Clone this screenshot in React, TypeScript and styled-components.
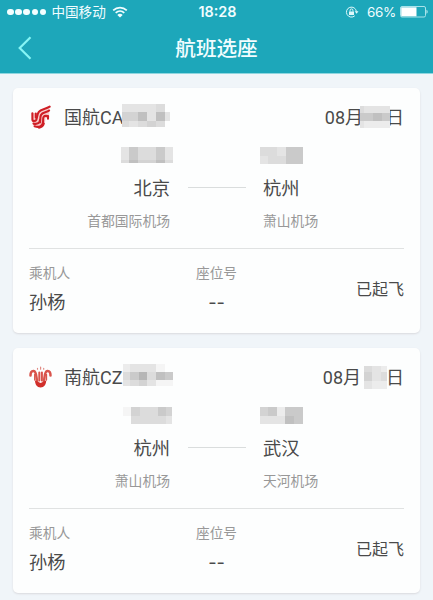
import styled, { createGlobalStyle, css } from 'styled-components';

interface MosaicData {
   cols: number[];
   rows: number[];
   tones: string;
   shift?: string;
}

interface Stop {
   city: string;
   airport: string;
   time: MosaicData;
}

interface Flight {
   airline: string;
   logo: 'phoenix' | 'kapok';
   code: MosaicData;
   day: MosaicData;
   from: Stop;
   to: Stop;
   passenger: string;
   seat: string;
   status: string;
}

// One hex digit per tile, read row by row
const toneColors: Record<string, string> = {
   '0': 'transparent',
   '1': '#f5f5f5',
   '2': '#ececec',
   '3': '#e4e4e4',
   '4': '#dcdcdc',
   '5': '#d3d3d3',
   '6': '#cacaca',
   '7': '#c0c0c0',
   '8': '#b6b6b6',
};

const flights: Flight[] = [
   {
      airline: '国航CA',
      logo: 'phoenix',
      code: {
         cols: [7, 9, 9, 9, 9, 5],
         rows: [8, 9, 6],
         tones: '333340' + '557373' + '434540',
         shift: '-3px 0 0 -1px',
      },
      day: {
         cols: [4, 9, 9, 8],
         rows: [7, 8, 7],
         tones: '4333' + '6676' + '3222',
         shift: '0 -4px 0 -3px',
      },
      from: {
         city: '北京',
         airport: '首都国际机场',
         time: {
            cols: [8, 9, 9, 9, 9, 8],
            rows: [13, 3],
            tones: '364463' + '475574',
            shift: '0 -3px 0 0',
         },
      },
      to: {
         city: '杭州',
         airport: '萧山机场',
         time: {
            cols: [8, 9, 9, 17],
            rows: [9, 8],
            tones: '4436' + '3446',
            shift: '0 0 0 -3px',
         },
      },
      passenger: '孙杨',
      seat: '--',
      status: '已起飞',
   },
   {
      airline: '南航CZ',
      logo: 'kapok',
      code: {
         cols: [7, 9, 8, 9, 9, 8],
         rows: [8, 8, 6],
         tones: '233310' + '468476' + '345311',
         shift: '-4px 0 0 0',
      },
      day: {
         cols: [8, 9, 6],
         rows: [6, 9, 8],
         tones: '432' + '534' + '322',
         shift: '0 -1px 0 3px',
      },
      from: {
         city: '杭州',
         airport: '萧山机场',
         time: {
            cols: [8, 9, 9, 9, 8, 6],
            rows: [9, 8],
            tones: '154465' + '044443',
            shift: '0 -2px 0 0',
         },
      },
      to: {
         city: '武汉',
         airport: '天河机场',
         time: {
            cols: [8, 9, 8, 9, 9],
            rows: [9, 8],
            tones: '56266' + '33376',
            shift: '0 0 0 -3px',
         },
      },
      passenger: '孙杨',
      seat: '--',
      status: '已起飞',
   },
];

const Mosaic = ({ cols, rows, tones, shift }: MosaicData) => (
   <Tiles $cols={cols} $rows={rows} $shift={shift}>
      {tones.split('').map((tone, i) => (
         <Tile key={i} $tone={tone} />
      ))}
   </Tiles>
);

const PhoenixLogo = () => (
   <svg width="22" height="24" viewBox="0 0 22 24" fill="none">
      <path
         fill="#f9d0ce"
         d="M2.500 8h5v4C8.500 5 12 4 20.500 1.500L20 13h-3.500c0 5-1.500 9-6.500 10L4 20.500Z"
      />
      <g stroke="#cf1f26" strokeWidth="2.100" strokeLinecap="round">
         <path d="M3.400 8.300v6.200c0 2 3 2 3.900.2.900-2 .7-5.500 2.500-7.900C12 3.700 16.500 4.400 20.700 1.700" />
         <path d="M6.800 8.500v4M11 17.500c.6-2.200-.1-5.400 1-7.500 1.600-3 5.600-2.200 8.100-4.500" />
         <path d="M4.500 18.600c4.500 1 6.200-.8 6.500-3.600M14 17.500c.5-2-.4-4 .7-5.700 1-1.500 3-.9 4.400-.6" />
         <path d="M5.600 21.300c5 1.600 8.200-.4 8.400-4.500M19 11.200v2.500" />
         <path d="M10 22.600c2.700-.5 4.300-1.800 4.800-4" />
      </g>
   </svg>
);

const KapokLogo = () => (
   <svg width="24" height="24" viewBox="0 0 24 24" fill="none">
      <g stroke="#d9544c" strokeLinecap="round">
         <path
            strokeWidth="2.500"
            d="M8.200 17C7.200 13.500 8 6.300 4.600 6 2.300 5.800 1.500 8 1.500 10.500M14.800 17c1-3.500.2-10.700 3.600-11 2.300-.2 3.100 2 3.100 4.500"
         />
         <path strokeWidth="2" d="M10.300 15.500V7.500M12.900 15.500V7.500" />
         <path strokeWidth="1.300" d="M5.700 15V9.500M17.500 15V9.500" />
         <path strokeWidth="1.200" stroke="#e08a84" d="M8.500 4.200v-.8M11.600 4.200V2M14.700 4.200v-.8" />
      </g>
      <path fill="#d12f2b" d="M6 15.500 11.600 18l5.600-2.500c-.1 4-2 7-5.600 7S6.100 19.500 6 15.500Z" />
   </svg>
);

const WifiIcon = () => (
   <svg width="16" height="12" viewBox="0 0 16 12" fill="none" stroke="#f1fdff">
      <path strokeWidth="1.700" d="M1.200 4.300c3.900-3.700 9.700-3.700 13.600 0" />
      <path strokeWidth="1.700" d="M3.700 6.900c2.500-2.300 6.100-2.300 8.600 0" />
      <path fill="#f1fdff" stroke="none" d="M5.300 8.900c1.600-1.400 3.800-1.400 5.400 0L8 11.600Z" />
   </svg>
);

const RotationLockIcon = () => (
   <svg width="14" height="12" viewBox="0 0 14 12" fill="none" stroke="#dff8fb">
      <path d="M9.800 9.800A5 5 0 1 1 11.400 5.500" />
      <path fill="#dff8fb" stroke="none" d="M9.700 5.300h3.800l-1.900 2.400ZM4 5.400h5v3.500H4Z" />
      <path d="M5.100 5.500V4.300a1.400 1.400 0 0 1 2.800 0v1.200" />
   </svg>
);

const BatteryIcon = () => (
   <svg width="28" height="12" viewBox="0 0 28 12" fill="none">
      <rect x=".5" y=".5" width="25" height="10.500" rx="1.500" stroke="#a9e3ea" />
      <path fill="#fff" d="M1.200 1.300h15.300v9H1.200Z" />
      <path fill="#c9f0f4" d="M26.500 3.800c1.500.6 1.500 3.400 0 4Z" />
   </svg>
);

const BackIcon = () => (
   <svg width="14" height="24" viewBox="0 0 14 24" fill="none">
      <path d="M12.500 1.200 1.700 12l10.800 10.800" stroke="#86f5f5" strokeWidth="2.200" />
   </svg>
);

const FlightCard = ({ flight }: { flight: Flight }) => (
   <Card>
      <CardHead>
         <Logo>{flight.logo === 'phoenix' ? <PhoenixLogo /> : <KapokLogo />}</Logo>
         <HeadText>{flight.airline}</HeadText>
         <Mosaic {...flight.code} />
         <DateGroup>
            <HeadText>08月</HeadText>
            <Mosaic {...flight.day} />
            <HeadText>日</HeadText>
         </DateGroup>
      </CardHead>
      <Route>
         <StopColumn $end>
            <TimeSlot><Mosaic {...flight.from.time} /></TimeSlot>
            <City>{flight.from.city}</City>
            <Airport>{flight.from.airport}</Airport>
         </StopColumn>
         <RouteLine />
         <StopColumn>
            <TimeSlot><Mosaic {...flight.to.time} /></TimeSlot>
            <City>{flight.to.city}</City>
            <Airport>{flight.to.airport}</Airport>
         </StopColumn>
      </Route>
      <CardFoot>
         <Field>
            <Label>乘机人</Label>
            <Value>{flight.passenger}</Value>
         </Field>
         <Field $center>
            <Label>座位号</Label>
            <Value>{flight.seat}</Value>
         </Field>
         <Status>{flight.status}</Status>
      </CardFoot>
   </Card>
);

const App = () => (
   <>
      <GlobalStyle />
      <Screen>
         <Header>
            <StatusBar>
               <Carrier>
                  <Signal>
                     {[0, 1, 2, 3, 4].map((dot) => <SignalDot key={dot} />)}
                  </Signal>
                  <CarrierName>中国移动</CarrierName>
                  <WifiIcon />
               </Carrier>
               <Clock>18:28</Clock>
               <Power>
                  <RotationLockIcon />
                  <Percent>66%</Percent>
                  <BatteryIcon />
               </Power>
            </StatusBar>
            <NavBar>
               <BackButton aria-label="返回"><BackIcon /></BackButton>
               <Title>航班选座</Title>
            </NavBar>
         </Header>
         <List>
            {flights.map((flight) => (
               <FlightCard key={flight.airline} flight={flight} />
            ))}
         </List>
      </Screen>
   </>
);

export default App;

const GlobalStyle = createGlobalStyle`
   body {
      margin: 0;
      background: #f0f5f9;
   }
   * {
      box-sizing: border-box;
   }
   svg {
      display: block;
      flex: none;
   }
`;

const Screen = styled.div`
   width: 433px;
   height: 600px;
   overflow: hidden;
   background: #f0f5f9;
   color: #4a4a4a;
   font-family: Roboto, 'Noto Sans CJK SC', sans-serif;
   font-weight: 400;
   white-space: nowrap;
`;

const Header = styled.header`
   height: 74px;
   background: #1da7ba;
   border-bottom: 1px solid #8fd6df;
   color: #f1fdff;
`;

const StatusBar = styled.div`
   display: grid;
   grid-template-columns: 1fr auto 1fr;
   align-items: center;
   height: 24px;
   padding: 0 5px 0 7px;
`;

const Carrier = styled.div`
   display: flex;
   align-items: center;
`;

const Signal = styled.div`
   display: flex;
   gap: 1.500px;
   margin-right: 5px;
`;

const SignalDot = styled.span`
   width: 6.700px;
   height: 6.700px;
   border-radius: 50%;
   background: #f4feff;
`;

const CarrierName = styled.span`
   margin-right: 6px;
   font-size: 13.600px;
   line-height: 20px;
`;

const Clock = styled.span`
   font: 600 14.400px/20px Inter, sans-serif;
`;

const Power = styled.div`
   display: flex;
   align-items: center;
   justify-content: flex-end;
`;

const Percent = styled.span`
   margin: 0 4px 0 8px;
   font: 400 13.500px/20px Inter, sans-serif;
   letter-spacing: -0.3px;
`;

const NavBar = styled.div`
   display: grid;
   grid-template-columns: 60px 1fr 60px;
   align-items: center;
   height: 48px;
`;

const BackButton = styled.button`
   padding: 0 0 0 18px;
   border: 0;
   background: none;
`;

const Title = styled.h1`
   margin: 0;
   padding-top: 2px;
   font-size: 20.600px;
   font-weight: 500;
   line-height: 28px;
   text-align: center;
`;

const List = styled.main`
   display: flex;
   flex-direction: column;
   gap: 15px;
   padding: 14px 13px;
`;

const Card = styled.section`
   flex: none;
   height: 245px;
   padding: 0 16px;
   border-radius: 5px;
   background: #fdfefe;
   box-shadow: 0 1px 2px #d9dade;
`;

const CardHead = styled.div`
   display: flex;
   align-items: center;
   height: 58px;
`;

const Logo = styled.div`
   width: 35px;
`;

const HeadText = styled.span`
   padding-top: 2px;
   font-size: 18px;
   line-height: 26px;
`;

const DateGroup = styled.div`
   display: flex;
   align-items: center;
   margin-left: auto;
`;

const Tiles = styled.div<{ $cols: number[]; $rows: number[]; $shift?: string }>`
   position: relative;
   display: grid;
   flex: none;
   grid-template-columns: ${({ $cols }) => $cols.map((c) => `${c}px`).join(' ')};
   grid-template-rows: ${({ $rows }) => $rows.map((r) => `${r}px`).join(' ')};
   margin: ${({ $shift }) => $shift || 0};
`;

const Tile = styled.i<{ $tone: string }>`
   background: ${({ $tone }) => toneColors[$tone]};
`;

const Route = styled.div`
   display: grid;
   grid-template-columns: 141px 93px 1fr;
   height: 103px;
   border-bottom: 1px solid #e0e2e2;
`;

const StopColumn = styled.div<{ $end?: boolean }>`
   display: flex;
   flex-direction: column;
   ${({ $end }) =>
      $end &&
      css`
         align-items: flex-end;
      `}
`;

const TimeSlot = styled.div`
   display: flex;
   align-items: center;
   height: 18px;
`;

const City = styled.div`
   margin-top: 12px;
   font-size: 18.300px;
   line-height: 26px;
`;

const Airport = styled.div`
   margin-top: 9px;
   color: #989898;
   font-size: 13.800px;
   line-height: 20px;
`;

const RouteLine = styled.div`
   height: 1px;
   margin: 41px 17px 0 18px;
   background: #dadddd;
`;

const CardFoot = styled.div`
   display: grid;
   grid-template-columns: 141px 93px 1fr;
   height: 84px;
`;

const Field = styled.div<{ $center?: boolean }>`
   padding-top: 14px;
   text-align: ${({ $center }) => ($center ? 'center' : 'left')};
`;

const Label = styled.div`
   color: #989898;
   font-size: 13.700px;
   line-height: 20px;
`;

const Value = styled.div`
   margin-top: 6px;
   font-family: Inter, 'Noto Sans CJK SC', sans-serif;
   font-size: 18.200px;
   line-height: 26px;
`;

const Status = styled.div`
   padding-top: 29px;
   font-size: 16px;
   line-height: 24px;
   text-align: right;
`;
